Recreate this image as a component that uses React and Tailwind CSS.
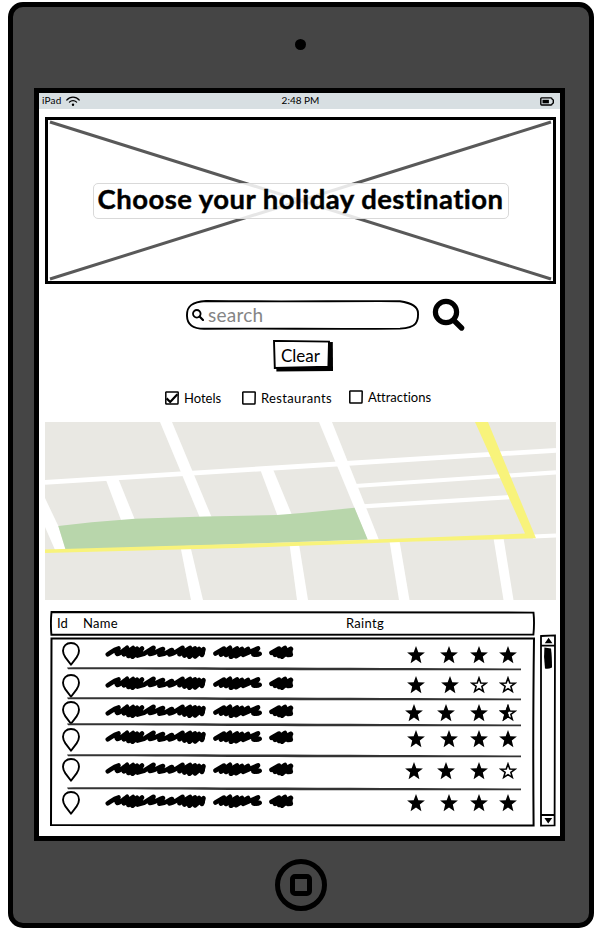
import React from "react";

const STAR =
  "M9 0 L11.3 6.3 L17.9 6.6 L12.8 10.6 L14.4 17.2 L9 13.6 L3.6 17.2 L5.2 10.6 L0.1 6.6 L6.7 6.3 Z";

function Star({ kind, className }) {
  return (
    <svg viewBox="0 0 18 18" className={`h-[18px] w-[18px] shrink-0 ${className}`}>
      {kind === "full" && <path d={STAR} fill="#000" />}
      {kind !== "full" && (
        <path
          d="M9 2 L10.8 7 L16 7.3 L11.9 10.4 L13.3 15.5 L9 12.6 L4.7 15.5 L6.1 10.4 L2 7.3 L7.2 7 Z"
          fill="#fff"
          stroke="#000"
          strokeWidth="1.6"
        />
      )}
      {kind === "half" && (
        <path d="M9 0 L6.7 6.3 L0.1 6.6 L5.2 10.6 L3.6 17.2 L9.8 13 L9.8 10.5 L8.8 9 L10 7.5 L9.8 2.5 Z" fill="#000" />
      )}
    </svg>
  );
}

function Pin({ className }) {
  return (
    <svg viewBox="0 0 18 24" className={`h-6 w-[18px] shrink-0 ${className}`}>
      <path
        d="M9 22.8 L3.4 15.4 C1.8 13 1 11 1 8.8 C1 4 4.4 1 9 1 C13.6 1 17 4 17 8.8 C17 11 16.2 13 14.6 15.4 Z"
        fill="#fff"
        stroke="#000"
        strokeWidth="1.9"
        strokeLinejoin="round"
      />
    </svg>
  );
}

function Scribble({ className }) {
  return (
    <svg viewBox="0 0 190 14" className={`h-[14px] w-[190px] shrink-0 ${className}`}>
      <g fill="none" stroke="#000" strokeWidth="4.6" strokeLinecap="round" strokeLinejoin="round">
        <path d="M2.8 9.4 C6 7.4 9 4.4 13.5 3.4 C11.5 7 11 8 12.5 9 C16 8.6 19 5 22 2.8 L19 9.5 L28 3 L23.5 11 L32 3.8 L27.5 11.8 L37 3.5 L32.5 10.6 L39 8.8 L48.5 2.8 L45 9 C49 9.2 53 5.4 58 4 L54.5 9.8 C60 9.6 63 6.4 67 5 L64.5 9.4 C69 9 73 5 77.5 2.8 L74.5 9.2 L85 3 L79.5 10.6 L90 3.5 L84.5 11.8 L94 4 L90 11.4 L98.5 4.2 L97 10" />
        <path d="M22 7.4 H35 M80 7.4 H97" strokeWidth="6" />
        <path d="M110.5 8.6 L119 3.6 L116 9.6 L125 2.8 L121 10 L132 3.5 L126 11.8 L137 4 L131 11.2 L143 4 L138 9.8 L153 3.4 L148.5 9.4 C151 9.8 153 9.8 154.6 8.8" />
        <path d="M118 7.5 H137" strokeWidth="5.6" />
        <path d="M166.5 7.8 L174 3.6 L170 9.8 L180 3 L174 11 L185.4 4 L177 11.8 L186 4 L183 10 L185.8 9.6" />
        <path d="M170 7.5 H184.6" strokeWidth="6" />
      </g>
    </svg>
  );
}

const FOUR = ["full", "full", "full", "full"];
const ROWS = [
  { h: "h-[30px]", pin: "mt-[3px]", name: "mt-[6px]", stars: "mt-[7px] ml-[112px]", kinds: FOUR, gaps: ["", "ml-[15px]", "ml-[12px]", "ml-[11px]"], line: true },
  { h: "h-[30px]", pin: "mt-[5px]", name: "mt-[7px]", stars: "mt-[7px] ml-[112px]", kinds: ["full", "full", "empty", "empty"], gaps: ["", "ml-[16px]", "ml-[11px]", "ml-[11px]"], line: true },
  { h: "h-[26px]", pin: "mt-[2px]", name: "mt-[5px]", stars: "mt-[5px] ml-[110px]", kinds: ["full", "full", "full", "half"], gaps: ["", "ml-[14px]", "ml-[15px]", "ml-[11px]"], line: true },
  { h: "h-[31px]", pin: "mt-[3px]", name: "mt-[5px]", stars: "mt-[5px] ml-[112px]", kinds: FOUR, gaps: ["", "ml-[15px]", "ml-[12px]", "ml-[11px]"], line: true },
  { h: "h-[33px]", pin: "mt-[2px]", name: "mt-[6px]", stars: "mt-[6px] ml-[110px]", kinds: ["full", "full", "full", "empty"], gaps: ["", "ml-[14px]", "ml-[15px]", "ml-[11px]"], line: true },
  { h: "h-[35px]", pin: "mt-[2px]", name: "mt-[5px]", stars: "mt-[5px] ml-[112px]", kinds: FOUR, gaps: ["", "ml-[15px]", "ml-[12px]", "ml-[11px]"], line: false },
];

function Row({ row }) {
  return (
    <div className={`relative flex items-start pl-[9px] ${row.h}`}>
      <Pin className={row.pin} />
      <Scribble className={`ml-[25px] ${row.name}`} />
      <div className={`flex ${row.stars}`}>
        {row.kinds.map((k, i) => (
          <Star key={i} kind={k} className={row.gaps[i]} />
        ))}
      </div>
      {row.line && (
        <svg viewBox="0 0 456 4" className="absolute -bottom-[2px] left-[13px] h-1 w-[456px]">
          <path d="M1 0.4 C100 0 300 0.9 455 1.5 L455 3.2 C300 3.6 120 2.6 2 2.2 Z" fill="#333" />
        </svg>
      )}
    </div>
  );
}

function MapView() {
  return (
    <svg viewBox="0 0 511 178" className="ml-[6px] mt-[16px] h-[178px] w-[511px] shrink-0 bg-[#e9e8e3]">
      <g fill="#fff">
        <path d="M115 0 L127 0 L167 96 L155 96 Z" />
        <path d="M61 58 L73 56 L90 98 L76 98 Z" />
        <path d="M215 47 L227.5 46 L247 93 L233 95 Z" />
        <path d="M0 76 L13.3 104 L21 129 L10.5 129 L0 105 Z" />
        <path d="M274 0 L287 0 L334 118 L322.7 118 Z" />
        <path d="M135.5 125 L145.5 125 L158 178 L146 178 Z" />
        <path d="M244.5 122 L254 122 L263 178 L252 178 Z" />
        <path d="M344.5 119 L354.5 119 L364.5 178 L354 178 Z" />
        <path d="M448.5 116 L458.5 116 L468.5 178 L458.5 178 Z" />
      </g>
      <g stroke="#fff" strokeWidth="4.8">
        <path d="M0 60.4 L511 28.3" />
        <path d="M310 64 L511 50.4" strokeWidth="4.2" />
        <path d="M318 84.4 L466 75" strokeWidth="4.2" />
        <path d="M488 114.6 L511 113.4" strokeWidth="4" />
      </g>
      <path d="M13.3 104 L46.7 100.3 L90 96.7 L160 94.5 L232 93 L260 90.7 L309.5 85.8 L322.7 117.5 L20.7 128 Z" fill="#b8d6ab" />
      <path d="M430 0 L443 0 L491 116.2 L370 119.6 L200 125.8 L0 131 L0 127.6 L190 122 L350 116.8 L480 111.6 Z" fill="#f8f37b" />
    </svg>
  );
}

function Check({ label, checked, gap, className }) {
  return (
    <div className={`flex items-center ${className}`}>
      <svg viewBox="0 0 14 14" className="h-[14px] w-[14px]">
        <path d="M1.3 0.9 L12.7 1 Q13.2 1 13.2 1.6 L13 12.5 Q13 13.1 12.4 13.1 L1.4 13 Q0.8 13 0.8 12.4 L0.8 1.4 Z" fill="#fff" stroke="#000" strokeWidth="1.5" />
        {checked && <path d="M1.6 7.4 L5.2 11 L12.4 3.2" fill="none" stroke="#000" strokeWidth="2.2" />}
      </svg>
      <span className={`text-[13px] leading-[14px] ${gap}`}>{label}</span>
    </div>
  );
}

export default function App() {
  return (
    <div className="flex h-[936px] w-[598px] items-start overflow-hidden bg-white pl-2 pt-[2px] font-['Lato',sans-serif] text-black [font-variant-ligatures:none]">
      <div className="flex h-[926px] w-[586px] flex-col items-start rounded-[15px] border-[5px] border-black bg-[#454545]">
        <div className="ml-[282px] mt-[32px] h-[11px] w-[11px] rounded-full bg-black" />
        <div className="ml-[21px] mt-[38px] flex h-[753px] w-[531px] flex-col border-[5px] border-black bg-white">
          <div className="grid h-4 shrink-0 grid-cols-[1fr_auto_1fr] items-center bg-[#d8dfe2] text-[10px] leading-4">
            <div className="flex items-center pl-[3px]">
              <span className="-mt-[2px] tracking-[0.2px]">iPad</span>
              <svg viewBox="0 0 14 11" className="ml-[4px] h-[11px] w-[14px]" fill="none" stroke="#000" strokeWidth="1.2" strokeLinecap="round">
                <path d="M0.8 4 C4 0.2 10 0.2 13.2 4" />
                <path d="M3.4 6.2 C5.4 4.2 8.6 4.2 10.6 6.2" />
                <circle cx="7" cy="8.8" r="1.2" fill="#000" stroke="none" />
              </svg>
            </div>
            <span className="-mt-[2px] pl-[2px]">2:48 PM</span>
            <div className="flex justify-end pr-[6px]">
              <svg viewBox="0 0 14 9" className="h-[9px] w-[14px]">
                <path d="M1.6 0.9 H11 Q12 0.9 12 2 L13.3 3 V6 L12 7 Q12 8 11 8 H1.6 Q0.8 8 0.8 7 V2 Q0.8 0.9 1.6 0.9 Z" fill="none" stroke="#000" strokeWidth="1.4" />
                <rect x="2.5" y="2.8" width="6.4" height="3.5" fill="#000" />
              </svg>
            </div>
          </div>

          <div className="relative ml-[6px] mt-2 flex h-[167px] w-[511px] shrink-0 items-center justify-center border-[3px] border-black">
            <svg viewBox="0 0 505 161" className="absolute inset-0 h-full w-full">
              <path d="M2 2 L503 159 M2 159 L503 2" stroke="#595959" strokeWidth="3" />
            </svg>
            <div className="relative flex h-[36px] w-[416px] items-center justify-center rounded-[5px] border border-[#d9d9d9] bg-white/85">
              <h1 className="-mt-[4px] whitespace-nowrap text-[27.5px] font-bold leading-[34px] tracking-[0.45px] [-webkit-text-stroke:0.4px_black]">
                Choose your holiday destination
              </h1>
            </div>
          </div>

          <div className="ml-[147px] mt-[14px] flex h-[34px] shrink-0 items-center">
            <div className="relative flex h-[30px] w-[233px] items-center pl-[6px]">
              <svg viewBox="0 0 233 30" className="absolute inset-0 h-[30px] w-[233px]">
                <path d="M20 1 C90 1.8 150 1 214 1.2 C226 3 232 7 232 13 C232.4 21 231 28 214 28.6 C150 29.4 80 28.2 18 28.8 C6 28.8 1.2 24 1 16 C0.6 6 6 2 20 1 Z" fill="#fff" stroke="#000" strokeWidth="1.9" />
              </svg>
              <svg viewBox="0 0 12 12" className="relative h-3 w-3" fill="none" stroke="#000" strokeLinecap="round">
                <circle cx="4.8" cy="4.8" r="3.8" strokeWidth="1.8" />
                <path d="M7.8 7.8 L11 11" strokeWidth="2.2" />
              </svg>
              <span className="relative -mt-[1px] ml-1 text-[19px] leading-6 tracking-[0.25px] text-[#858585]">search</span>
            </div>
            <svg viewBox="0 0 34 34" className="ml-[13px] h-[34px] w-[34px]" fill="none" stroke="#000" strokeLinecap="round">
              <circle cx="14" cy="14" r="10.6" strokeWidth="5.2" />
              <path d="M21.5 22 L29.6 30" strokeWidth="5.4" />
            </svg>
          </div>

          <button className="relative ml-[234px] mt-[8px] flex h-[32px] w-[60px] shrink-0 items-center">
            <svg viewBox="0 0 60 32" className="absolute inset-0 h-8 w-[60px]">
              <path d="M3 3 L59.8 2 L60 31 L3.4 31.4 Z" fill="#000" />
              <path d="M1 0.9 L56 1.6 L55.4 26.8 L1.8 28 Z" fill="#fff" stroke="#000" strokeWidth="1.9" />
            </svg>
            <span className="relative -mt-[1px] ml-2 text-[17px] leading-5">Clear</span>
          </button>

          <div className="ml-[126px] mt-[17px] flex h-[17px] shrink-0 items-center">
            <Check label="Hotels" checked gap="ml-[5px]" className="w-[77px]" />
            <Check label="Restaurants" gap="ml-[5px] tracking-[0.35px]" className="w-[107px]" />
            <Check label="Attractions" gap="ml-[5px]" className="-mt-[2px]" />
          </div>

          <MapView />

          <div className="mt-[11px] flex shrink-0">
            <div className="ml-[11px] w-[485px]">
              <div className="relative flex h-[25px] items-center text-[13px] leading-4">
                <svg viewBox="0 0 485 25" className="absolute inset-0 h-[25px] w-[485px]">
                  <path d="M1.5 1 L483.5 1.6 Q484.6 12 483.4 23.6 L1.4 23.8 Q0.4 12 1.5 1 Z" fill="#fff" stroke="#000" strokeWidth="1.9" />
                </svg>
                <span className="relative -mt-[2px] ml-[7px] w-[26px]">Id</span>
                <span className="relative -mt-[2px] w-[263px] tracking-[0.3px]">Name</span>
                <span className="relative -mt-[2px] tracking-[0.3px]">Raintg</span>
              </div>
              <div className="relative mt-[1px] h-[190px] pl-[3px] pt-[2px]">
                <svg viewBox="0 0 485 190" className="absolute inset-0 h-[190px] w-[485px]">
                  <path d="M1.5 1.4 L484 1.4 Q482.8 90 483.6 188.6 Q240 187.6 1 188 Q0.9 100 1.5 1.4 Z" fill="#fff" stroke="#000" strokeWidth="2" />
                </svg>
                {ROWS.map((r, i) => (
                  <Row key={i} row={r} />
                ))}
              </div>
            </div>
            <svg viewBox="0 0 16 193" className="ml-[5px] mt-[23px] h-[193px] w-4">
              <path d="M1 2 L15 1.4 L14.6 191.4 L1 191.6 Z" fill="#fff" stroke="#000" strokeWidth="1.8" />
              <path d="M1 11.6 H15 M1 181 H15" stroke="#000" strokeWidth="1.8" />
              <path d="M8.6 3.8 L12.4 9.2 L4.8 9.2 Z M4.4 184 L12.2 184 L8.2 189.6 Z" fill="#000" />
              <path d="M4.4 13.6 L11 14.4 Q12 22 12 33.4 Q8 35.4 5 34.4 Q3.4 23 4.4 13.6 Z" fill="#000" />
            </svg>
          </div>
        </div>

        <div className="ml-[262px] mt-[18px] flex h-[52px] w-[52px] items-center justify-center rounded-full border-[5px] border-black">
          <div className="h-[22px] w-[22px] rounded-[5px] border-[5px] border-black" />
        </div>
      </div>
    </div>
  );
}
